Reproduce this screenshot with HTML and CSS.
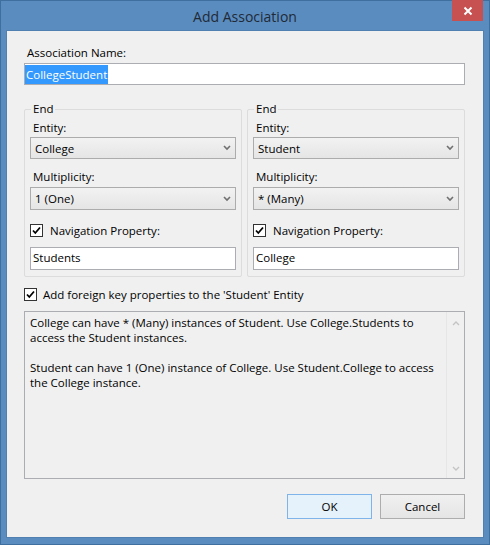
FILE: index.html
```html
<!DOCTYPE html>
<html lang="en">
<head>
    <meta charset="UTF-8">
    <title>Add Association</title>
    <link rel="stylesheet" href="styles.css">
</head>
<body>
    <div class="window">
        <div class="titlebar">
            <span class="title">Add Association</span>
            <span class="close">
                <svg width="10" height="10" viewBox="0 0 10 10"><path d="M1.5 1.5 L8.5 8.5 M8.5 1.5 L1.5 8.5" stroke="#fff" stroke-width="2"/></svg>
            </span>
        </div>
        <div class="client">
            <div class="label name-label">Association Name:</div>
            <div class="textbox name-box"><span class="selected">CollegeStudent</span></div>

            <div class="ends">
                <div class="group">
                    <div class="legend">End</div>
                    <div class="label entity-label">Entity:</div>
                    <div class="select"><span>College</span>
                        <svg class="chevron" width="8" height="6" viewBox="0 0 8 6"><path d="M1 1 L4 4 L7 1" fill="none" stroke="#707070" stroke-width="1.6"/></svg>
                    </div>
                    <div class="label mult-label">Multiplicity:</div>
                    <div class="select mult-select"><span>1 (One)</span>
                        <svg class="chevron" width="8" height="6" viewBox="0 0 8 6"><path d="M1 1 L4 4 L7 1" fill="none" stroke="#707070" stroke-width="1.6"/></svg>
                    </div>
                    <div class="check-row nav-row">
                        <span class="checkbox"><svg width="11" height="11" viewBox="0 0 11 11"><path d="M2 5.5 L4.3 8 L9 2.5" fill="none" stroke="#000" stroke-width="1.8"/></svg></span>
                        <span>Navigation Property:</span>
                    </div>
                    <div class="textbox nav-box">Students</div>
                </div>
                <div class="group">
                    <div class="legend">End</div>
                    <div class="label entity-label">Entity:</div>
                    <div class="select"><span>Student</span>
                        <svg class="chevron" width="8" height="6" viewBox="0 0 8 6"><path d="M1 1 L4 4 L7 1" fill="none" stroke="#707070" stroke-width="1.6"/></svg>
                    </div>
                    <div class="label mult-label">Multiplicity:</div>
                    <div class="select mult-select"><span>* (Many)</span>
                        <svg class="chevron" width="8" height="6" viewBox="0 0 8 6"><path d="M1 1 L4 4 L7 1" fill="none" stroke="#707070" stroke-width="1.6"/></svg>
                    </div>
                    <div class="check-row nav-row">
                        <span class="checkbox"><svg width="11" height="11" viewBox="0 0 11 11"><path d="M2 5.5 L4.3 8 L9 2.5" fill="none" stroke="#000" stroke-width="1.8"/></svg></span>
                        <span>Navigation Property:</span>
                    </div>
                    <div class="textbox nav-box">College</div>
                </div>
            </div>

            <div class="check-row fk-row">
                <span class="checkbox"><svg width="11" height="11" viewBox="0 0 11 11"><path d="M2 5.5 L4.3 8 L9 2.5" fill="none" stroke="#000" stroke-width="1.8"/></svg></span>
                <span>Add foreign key properties to the 'Student' Entity</span>
            </div>

            <div class="description">
                <div class="desc-text">
                    <p>College can have * (Many) instances of Student. Use College.Students to access the Student instances.</p>
                    <p>Student can have 1 (One) instance of College. Use Student.College to access the College instance.</p>
                </div>
                <div class="scrollbar">
                    <svg width="8" height="6" viewBox="0 0 8 6"><path d="M1 5 L4 2 L7 5" fill="none" stroke="#c4c4c4" stroke-width="1.4"/></svg>
                    <svg width="8" height="6" viewBox="0 0 8 6"><path d="M1 1 L4 4 L7 1" fill="none" stroke="#c4c4c4" stroke-width="1.4"/></svg>
                </div>
            </div>

            <div class="buttons">
                <div class="button default">OK</div>
                <div class="button">Cancel</div>
            </div>
        </div>
    </div>
</body>
</html>
```

FILE: styles.css
```css
body {
    margin: 0;
    font-family: "Open Sans", "Noto Sans", sans-serif;
    font-size: 11.5px;
    color: #000;
}

.window {
    width: 490px;
    height: 545px;
    box-sizing: border-box;
    background: #5a8cbf;
    border: 1px solid #3f6f9f;
    display: flex;
    flex-direction: column;
}

.titlebar {
    height: 30px;
    position: relative;
    display: flex;
    justify-content: center;
    align-items: center;
}

.title {
    font-size: 14px;
    color: #1f2a36;
}

.close {
    position: absolute;
    top: -1px;
    right: 6px;
    width: 31px;
    height: 21px;
    background: #c75050;
    display: flex;
    align-items: center;
    justify-content: center;
}

.client {
    flex: 1;
    margin: 0 6px 7px 6px;
    background: #f0f0f0;
    box-shadow: 0 0 0 1px #4f80b1;
    padding: 14px 18px 0 17px;
    line-height: 15px;
}

.label {
    margin-left: 3px;
}

.textbox {
    height: 22px;
    box-sizing: border-box;
    border: 1px solid #abadb3;
    background: #fff;
    padding: 0 2px;
    line-height: 20px;
}

.name-box {
    margin-top: 3px;
    padding: 1px 0 0 0;
    line-height: 19px;
}

.selected {
    background: #3399ff;
    color: #fff;
    padding: 0 1px;
    display: inline-block;
}

.ends {
    display: grid;
    grid-template-columns: 1fr 1fr;
    gap: 5px;
    margin-top: 24px;
}

.group {
    height: 168px;
    box-sizing: border-box;
    border: 1px solid #dcdcdc;
    border-radius: 2px;
    padding: 0 5px;
}

.legend {
    margin: -9px 0 0 1px;
    padding: 0 2px;
    width: fit-content;
    background: #f0f0f0;
}

.entity-label {
    margin-top: 4px;
}

.select {
    margin-top: 2px;
    height: 22px;
    box-sizing: border-box;
    border: 1px solid #acacac;
    background: linear-gradient(#f2f2f2, #e5e5e5);
    display: flex;
    align-items: center;
    justify-content: space-between;
    padding: 0 4px 0 4px;
}

.mult-label {
    margin-top: 10px;
}

.mult-select {
    margin-top: 3px;
    height: 23px;
}

.check-row {
    display: flex;
    align-items: center;
    gap: 7px;
}

.nav-row {
    margin-top: 13px;
}

.checkbox {
    width: 13px;
    height: 13px;
    box-sizing: border-box;
    border: 1px solid #333;
    background: #fff;
    display: flex;
    align-items: center;
    justify-content: center;
}

.nav-box {
    margin-top: 9px;
    height: 23px;
}

.fk-row {
    margin-top: 10px;
    gap: 6px;
}

.description {
    margin-top: 9px;
    height: 168px;
    box-sizing: border-box;
    border: 1px solid #abadb3;
    background: #f0f0f0;
    display: flex;
}

.desc-text {
    flex: 1;
    padding: 3px 12px 3px 5px;
}

.desc-text p {
    margin: 0 0 15px 0;
}

.scrollbar {
    width: 17px;
    border-left: 1px solid #e6e6e6;
    display: flex;
    flex-direction: column;
    justify-content: space-between;
    align-items: center;
    padding: 8px 0 6px 0;
}

.buttons {
    display: flex;
    justify-content: flex-end;
    gap: 8px;
    margin-top: 15px;
}

.button {
    width: 85px;
    height: 25px;
    box-sizing: border-box;
    border: 1px solid #adadad;
    background: linear-gradient(#f0f0f0, #e5e5e5);
    display: flex;
    align-items: center;
    justify-content: center;
}

.button.default {
    border-color: #7eb4ea;
    background: #e5f1fb;
}
```
